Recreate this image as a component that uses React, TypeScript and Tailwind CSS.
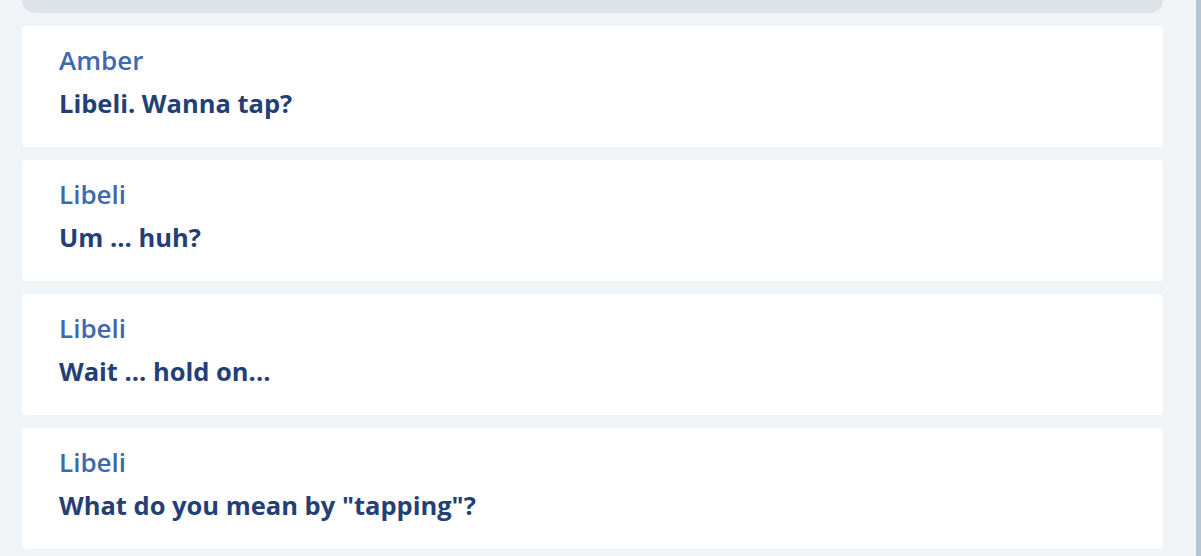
import React from "react";

const messages = [
  { name: "Amber", text: "Libeli. Wanna tap?" },
  { name: "Libeli", text: "Um ... huh?" },
  { name: "Libeli", text: "Wait ... hold on..." },
  { name: "Libeli", text: 'What do you mean by "tapping"?' },
];

export default function App() {
  return (
    <div
      className="flex h-[556px] w-[1201px] overflow-hidden bg-[#f0f4f7]"
      style={{ fontFamily: "'Open Sans', 'Noto Sans', sans-serif" }}
    >
      <div className="flex flex-1 flex-col gap-[13px] pl-[22px] pr-[33px]">
        <div className="h-[13px] shrink-0 rounded-b-[16px] bg-[#dde3e9]" />
        {messages.map((m, i) => (
          <div
            key={i}
            className="flex h-[121px] shrink-0 flex-col rounded-[4px] bg-white pl-[37px] pt-[16px]"
          >
            <div className="text-[26px] leading-[36px] font-semibold text-[#3f69ae]">
              {m.name}
            </div>
            <div className="mt-[8px] text-[25.5px] leading-[34px] font-bold text-[#233f74]">
              {m.text}
            </div>
          </div>
        ))}
      </div>
      <div className="w-[5px] shrink-0 bg-[#b6c3d1]" />
    </div>
  );
}
